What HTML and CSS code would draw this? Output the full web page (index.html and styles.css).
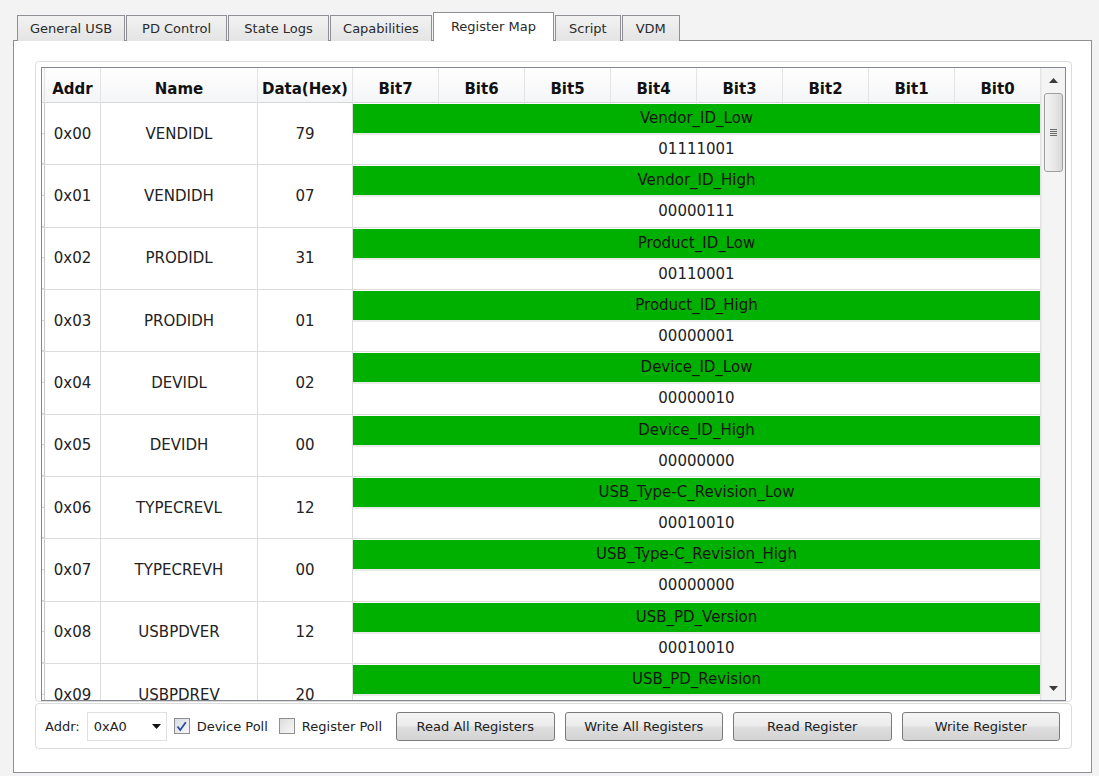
FILE: index.html
```html
<!DOCTYPE html>
<html>
<head>
<meta charset="utf-8">
<title>Register Map</title>
<link rel="stylesheet" href="styles.css">
</head>
<body>
<div class="app">
  <div class="tabs">
    <div class="tab">General USB</div>
    <div class="tab">PD Control</div>
    <div class="tab">State Logs</div>
    <div class="tab">Capabilities</div>
    <div class="tab active">Register Map</div>
    <div class="tab">Script</div>
    <div class="tab">VDM</div>
  </div>
  <div class="panel">
    <div class="frame table-frame">
      <div class="table">
        <div class="grid">
          <div class="head">
            <div class="strip"></div>
            <div class="hc">Addr</div>
            <div class="hc">Name</div>
            <div class="hc">Data(Hex)</div>
            <div class="hc">Bit7</div>
            <div class="hc">Bit6</div>
            <div class="hc">Bit5</div>
            <div class="hc">Bit4</div>
            <div class="hc">Bit3</div>
            <div class="hc">Bit2</div>
            <div class="hc">Bit1</div>
            <div class="hc">Bit0</div>
          </div>
          <div class="body">
            <div class="reg"><div class="strip"><i></i><i></i></div><div class="c">0x00</div><div class="c">VENDIDL</div><div class="c">79</div><div class="bits"><div class="field">Vendor_ID_Low</div><div class="value">01111001</div></div></div>
            <div class="reg"><div class="strip"><i></i><i></i></div><div class="c">0x01</div><div class="c">VENDIDH</div><div class="c">07</div><div class="bits"><div class="field">Vendor_ID_High</div><div class="value">00000111</div></div></div>
            <div class="reg"><div class="strip"><i></i><i></i></div><div class="c">0x02</div><div class="c">PRODIDL</div><div class="c">31</div><div class="bits"><div class="field">Product_ID_Low</div><div class="value">00110001</div></div></div>
            <div class="reg"><div class="strip"><i></i><i></i></div><div class="c">0x03</div><div class="c">PRODIDH</div><div class="c">01</div><div class="bits"><div class="field">Product_ID_High</div><div class="value">00000001</div></div></div>
            <div class="reg"><div class="strip"><i></i><i></i></div><div class="c">0x04</div><div class="c">DEVIDL</div><div class="c">02</div><div class="bits"><div class="field">Device_ID_Low</div><div class="value">00000010</div></div></div>
            <div class="reg"><div class="strip"><i></i><i></i></div><div class="c">0x05</div><div class="c">DEVIDH</div><div class="c">00</div><div class="bits"><div class="field">Device_ID_High</div><div class="value">00000000</div></div></div>
            <div class="reg"><div class="strip"><i></i><i></i></div><div class="c">0x06</div><div class="c">TYPECREVL</div><div class="c">12</div><div class="bits"><div class="field">USB_Type-C_Revision_Low</div><div class="value">00010010</div></div></div>
            <div class="reg"><div class="strip"><i></i><i></i></div><div class="c">0x07</div><div class="c">TYPECREVH</div><div class="c">00</div><div class="bits"><div class="field">USB_Type-C_Revision_High</div><div class="value">00000000</div></div></div>
            <div class="reg"><div class="strip"><i></i><i></i></div><div class="c">0x08</div><div class="c">USBPDVER</div><div class="c">12</div><div class="bits"><div class="field">USB_PD_Version</div><div class="value">00010010</div></div></div>
            <div class="reg"><div class="strip"><i></i><i></i></div><div class="c">0x09</div><div class="c">USBPDREV</div><div class="c">20</div><div class="bits"><div class="field">USB_PD_Revision</div><div class="value">00100000</div></div></div>
          </div>
        </div>
        <div class="vscroll">
          <div class="arrow"><svg width="9" height="5" viewBox="0 0 9 5"><path d="M0 5 L4.5 0 L9 5 Z" fill="#3c3c3c"/></svg></div>
          <div class="thumb"><span></span><span></span><span></span><span></span></div>
          <div class="track"></div>
          <div class="arrow"><svg width="9" height="5" viewBox="0 0 9 5"><path d="M0 0 L9 0 L4.5 5 Z" fill="#3c3c3c"/></svg></div>
        </div>
      </div>
    </div>
    <div class="frame controls">
      <span class="lbl">Addr:</span>
      <div class="combo"><span>0xA0</span><svg width="9" height="5" viewBox="0 0 9 5"><path d="M0 0 L9 0 L4.5 5 Z" fill="#111"/></svg></div>
      <label class="check"><span class="box checked"><svg width="13" height="13" viewBox="0 0 13 13"><path d="M2.5 6.5 L5.2 10 L10.8 2.2" fill="none" stroke="#2c4fa3" stroke-width="1.8"/></svg></span>Device Poll</label>
      <label class="check"><span class="box"></span>Register Poll</label>
      <div class="buttons">
        <div class="btn">Read All Registers</div>
        <div class="btn">Write All Registers</div>
        <div class="btn">Read Register</div>
        <div class="btn">Write Register</div>
      </div>
    </div>
  </div>
</div>
</body>
</html>
```

FILE: styles.css
```css
* { box-sizing: border-box; }
html, body { margin: 0; padding: 0; }
body {
  background: #f3f3f3;
  font-family: "DejaVu Sans", Verdana, sans-serif;
  color: #222;
  width: 1099px;
  height: 776px;
  overflow: hidden;
}
.app { padding: 12px 0 0 13px; }

.tabs {
  display: flex;
  align-items: flex-end;
  height: 28px;
  margin-left: 4px;
  position: relative;
  z-index: 2;
}
.tab {
  height: 26px;
  min-width: 101px;
  padding: 0 12px;
  margin-bottom: -1px;
  border: 1px solid #8e9096;
  border-bottom: none;
  background: linear-gradient(#f2f2f2, #e4e4e4);
  font-size: 13px;
  line-height: 26px;
  text-align: center;
  color: #2a2a2a;
  white-space: nowrap;
}
.tab + .tab { margin-left: 1px; }
.tab:nth-child(n+6) { min-width: 0; padding: 0 13px; }
.tab.active {
  height: 29px;
  padding: 0 17px;
  background: #fff;
  border-color: #8e9096;
  line-height: 28px;
}

.panel {
  width: 1079px;
  height: 733px;
  border: 1px solid #8e9096;
  background: #fff;
  padding: 20px 19px 0 21px;
  position: relative;
  z-index: 1;
}

.frame {
  border: 1px solid #dcdcdc;
  border-radius: 4px;
}
.table-frame { padding: 5px 5px 0 5px; }

.table {
  display: flex;
  border: 1px solid #828790;
  height: 634px;
}
.grid { width: 999px; display: flex; flex-direction: column; }

.head, .reg {
  display: grid;
  grid-template-columns: 3px 56px 157px 95px repeat(8, 86px);
}
.head {
  height: 35px;
  flex: none;
  border-bottom: 1px solid #d6d6d6;
  background: linear-gradient(#ffffff, #f4f5f7);
}
.head .strip { border-right: 1px solid #e2e2e2; }
.hc {
  border-right: 1px solid #e4e4e4;
  font-weight: bold;
  font-size: 15px;
  text-align: center;
  padding-top: 5px;
  line-height: 32px;
  color: #111;
  white-space: nowrap;
}

.body { flex: 1; overflow: hidden; }
.reg {
  height: 62.33px;
  border-bottom: 1px solid #dcdcdc;
  font-size: 15px;
}
.strip {
  border-right: 1px solid #c8c8c8;
  display: flex;
  flex-direction: column;
}
.strip i { flex: 1; border-bottom: 1px solid #d6d6d6; }
.c {
  border-right: 1px solid #dcdcdc;
  display: flex;
  align-items: center;
  justify-content: center;
  color: #222;
  white-space: nowrap;
}
.bits {
  grid-column: 5 / span 8;
  display: flex;
  flex-direction: column;
  border-right: 1px solid #e2e2e2;
}
.field {
  height: 29px;
  margin-top: 1px;
  background: #00b000;
  color: #151515;
  text-align: center;
  line-height: 29px;
  white-space: nowrap;
}
.value {
  flex: 1;
  border-top: 2px solid #e8ebe8;
  text-align: center;
  line-height: 28px;
  color: #222;
}

.vscroll {
  width: 24px;
  background: #f4f4f4;
  border-left: 1px solid #ececec;
  display: flex;
  flex-direction: column;
  align-items: center;
}
.arrow {
  height: 24px;
  width: 100%;
  display: flex;
  align-items: center;
  justify-content: center;
  flex: none;
}
.thumb {
  width: 19px;
  height: 79px;
  margin-top: 1px;
  border: 1px solid #9f9f9f;
  border-radius: 3px;
  background: linear-gradient(90deg, #f3f3f3, #e6e6e6 60%, #d8d8d8);
  display: flex;
  flex-direction: column;
  align-items: center;
  justify-content: center;
  gap: 1px;
  flex: none;
}
.thumb span { width: 7px; height: 1px; background: #6a6a6a; }
.track { flex: 1; }

.controls {
  margin-top: 1px;
  height: 46px;
  display: flex;
  align-items: center;
  padding: 0 11px 0 9px;
  font-size: 13px;
  color: #222;
}
.lbl { margin-right: 7px; }
.combo {
  width: 80px;
  height: 29px;
  border: 1px solid #e0e0e0;
  background: #fff;
  display: flex;
  align-items: center;
  justify-content: space-between;
  padding: 0 5px 0 6px;
  margin-right: 7px;
}
.check {
  display: flex;
  align-items: center;
  margin-right: 11px;
  white-space: nowrap;
}
.box {
  width: 16px;
  height: 16px;
  border: 1px solid #8f8f8f;
  background: linear-gradient(135deg, #dcdcdc, #f8f8f8);
  margin-right: 7px;
  display: flex;
  align-items: center;
  justify-content: center;
}
.box.checked { background: linear-gradient(135deg, #d8dde6, #f6f7f9); }
.buttons {
  flex: 1;
  display: flex;
  gap: 10px;
  margin-left: 3px;
}
.btn {
  flex: 1;
  height: 29px;
  border: 1px solid #7a7a7a;
  border-radius: 3px;
  background: linear-gradient(#f4f4f4, #ebebeb 48%, #dedede 52%, #d3d3d3);
  text-align: center;
  line-height: 27px;
  font-size: 13px;
  color: #222;
  white-space: nowrap;
}
```
